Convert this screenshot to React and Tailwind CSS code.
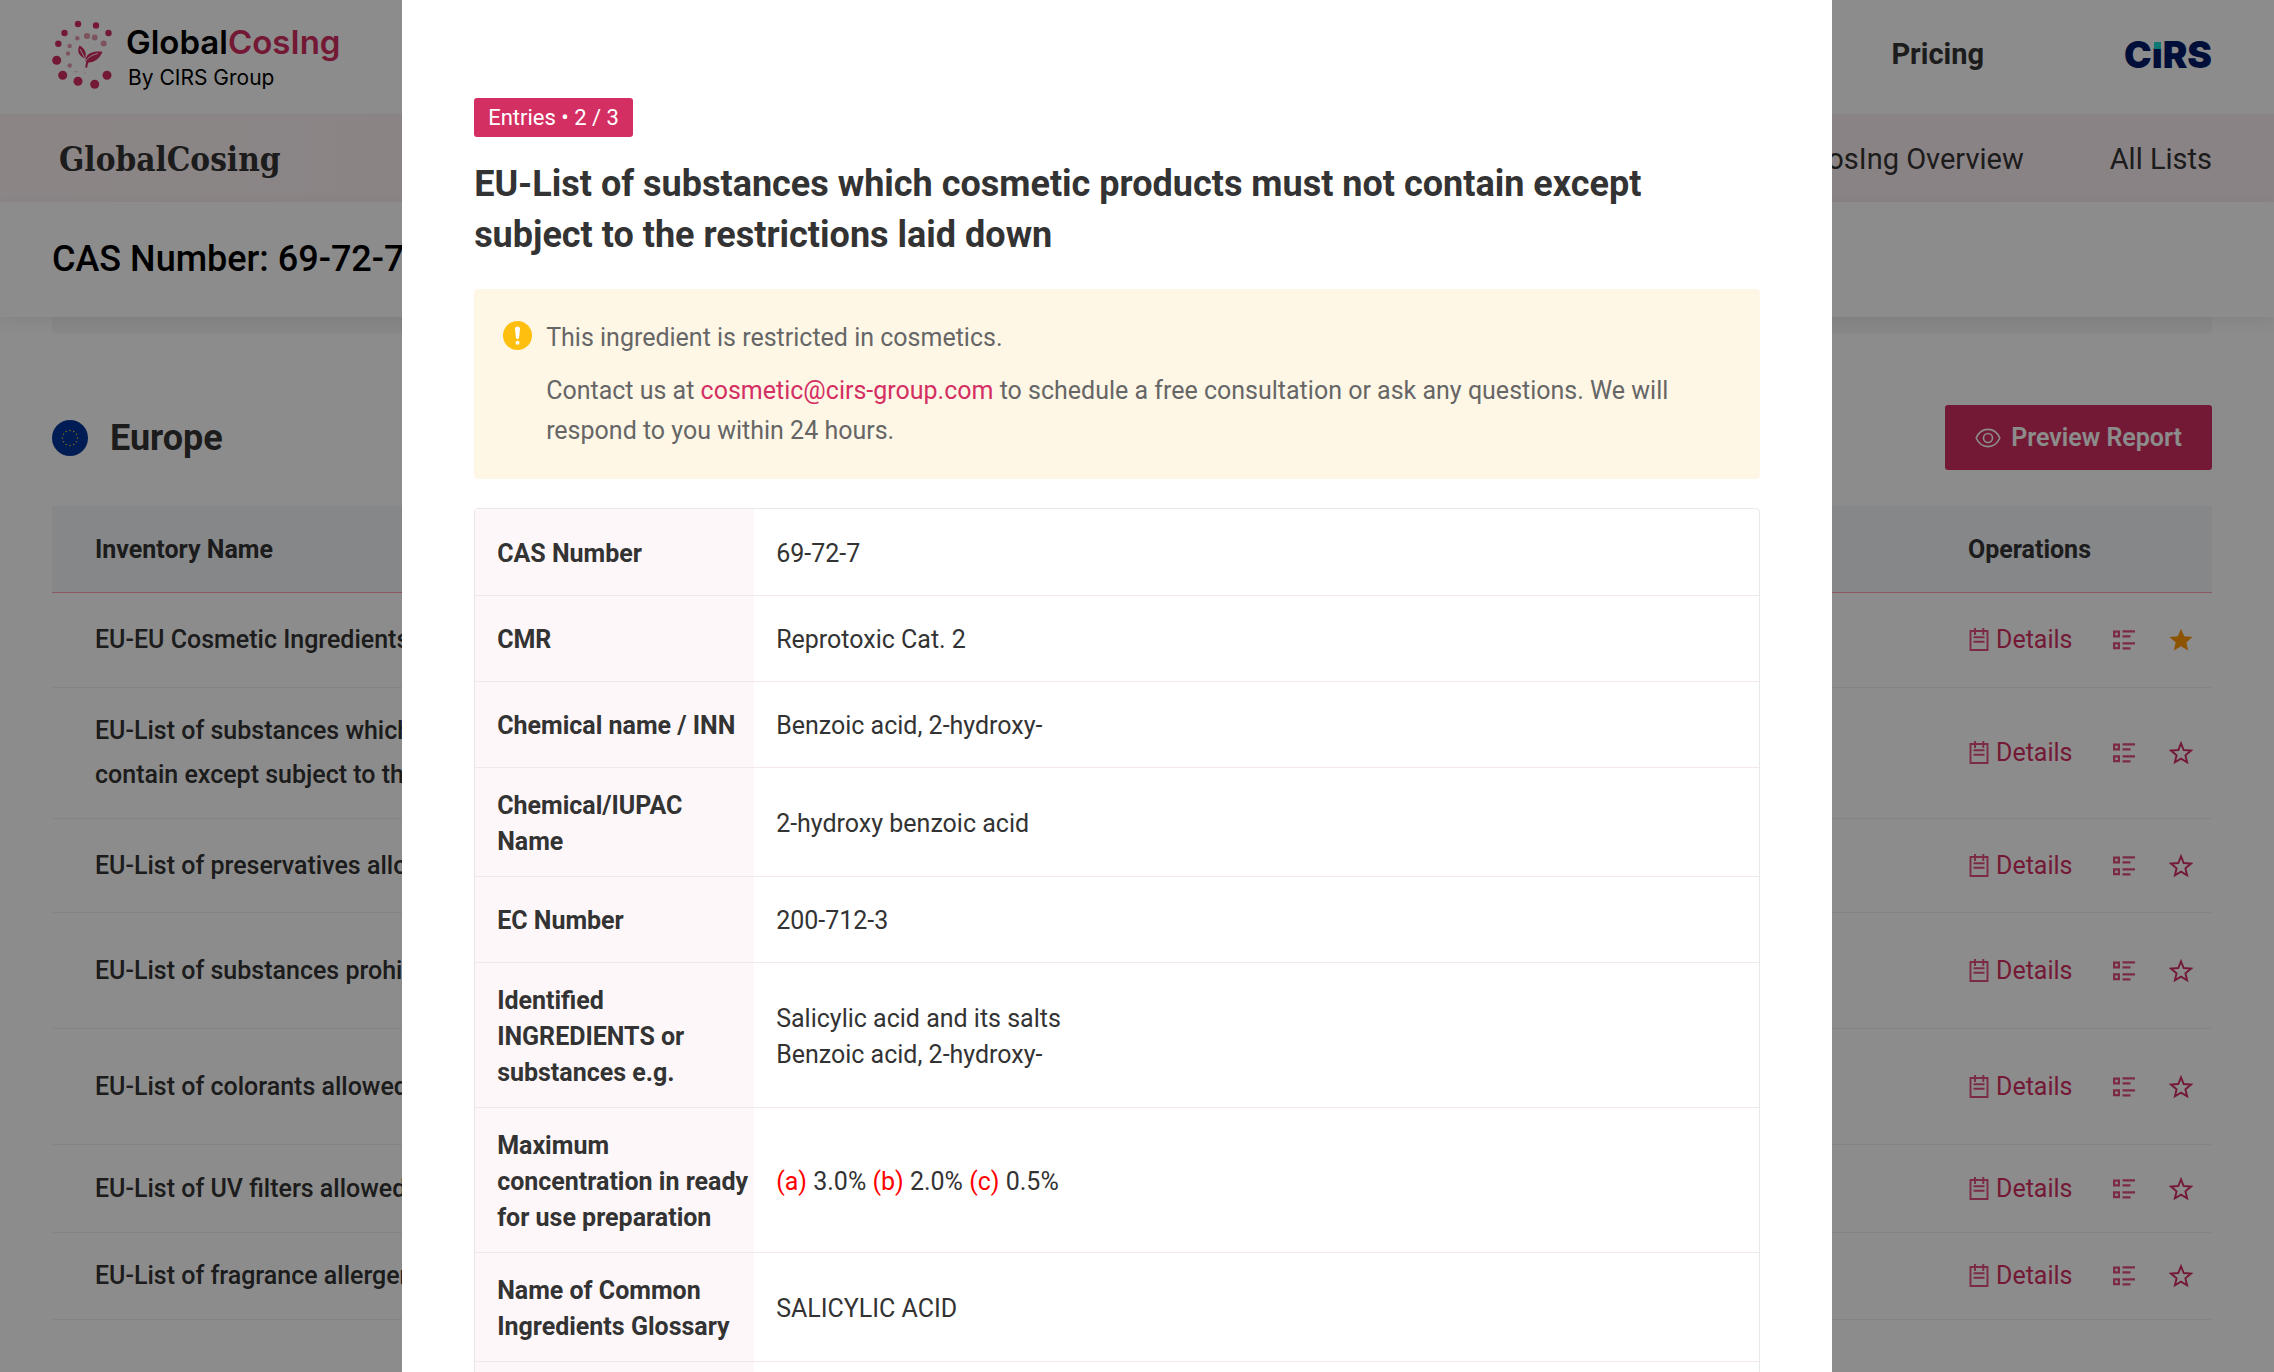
import React from "react";

const inventories = [
  { name: ["EU-EU Cosmetic Ingredients Inventory"], height: "h-[95px]", starred: true },
  {
    name: ["EU-List of substances which cosmetic products must not", "contain except subject to the restrictions laid down"],
    height: "h-[131px]",
  },
  { name: ["EU-List of preservatives allowed in cosmetic products"], height: "h-[94px]" },
  { name: ["EU-List of substances prohibited in cosmetic products"], height: "h-[116px]" },
  { name: ["EU-List of colorants allowed in cosmetic products"], height: "h-[116px]" },
  { name: ["EU-List of UV filters allowed in cosmetic products"], height: "h-[88px]" },
  { name: ["EU-List of fragrance allergens"], height: "h-[87px]" },
];

const facts = [
  ["CAS Number", "69-72-7"],
  ["CMR", "Reprotoxic Cat. 2"],
  ["Chemical name / INN", "Benzoic acid, 2-hydroxy-"],
  ["Chemical/IUPAC Name", "2-hydroxy benzoic acid"],
  ["EC Number", "200-712-3"],
  [
    "Identified INGREDIENTS or substances e.g.",
    <>
      Salicylic acid and its salts
      <br />
      Benzoic acid, 2-hydroxy-
    </>,
  ],
  [
    "Maximum concentration in ready for use preparation",
    <>
      <span className="text-[#ff0000]">(a)</span> 3.0% <span className="text-[#ff0000]">(b)</span> 2.0%{" "}
      <span className="text-[#ff0000]">(c)</span> 0.5%
    </>,
  ],
  ["Name of Common Ingredients Glossary", "SALICYLIC ACID"],
  ["", ""],
];

function LeafMark() {
  return (
    <svg className="h-[70px] w-[62px]" viewBox="0 0 62 70" aria-hidden="true">
      <g fill="#d42f62">
        <circle cx="26" cy="4" r="3.2" />
        <circle cx="44" cy="5.500" r="3.200" />
        <circle cx="56.500" cy="13" r="3.200" />
        <circle cx="12.500" cy="13" r="3.200" />
        <circle cx="6.300" cy="23.700" r="3.200" />
        <circle cx="4.700" cy="40.300" r="4.500" />
        <circle cx="10.700" cy="55.300" r="4.500" />
        <circle cx="26" cy="61.300" r="4.500" />
        <circle cx="42.700" cy="64.300" r="4.500" />
        <circle cx="55" cy="55.300" r="4.500" />
        <path d="M27.500 25.500c4.500 2.500 7.500 6.500 5.800 13-3.300-1.400-6.300-3-7-7-.4-2.300.3-4 1.200-6z" />
        <path d="M50.500 31.700c-8-.7-14.500.8-16.500 6-.6 1.500-.5 3-.2 4.300 5.500 1.500 12.700-.8 16.700-10.300z" />
        <path d="M33.500 48c-.5-5.500 2-9.500 8-12.500-3.500 3.500-5.600 6.500-6.200 12z" />
      </g>
      <path d="M28 29l4.500 8.500M33.800 41c2.200-3.600 6-6 12-7.500" stroke="#fff" strokeWidth="0.900" fill="none" />
      <g fill="#e39aab">
        <circle cx="25.300" cy="18.300" r="2.200" />
        <circle cx="35" cy="16" r="3.100" />
        <circle cx="42.700" cy="17.500" r="2.900" />
        <circle cx="51.700" cy="23.500" r="3" />
        <circle cx="17.700" cy="26" r="2.200" />
        <circle cx="16" cy="33.500" r="2.200" />
        <circle cx="17.700" cy="45.500" r="2.200" />
        <path d="M21.500 51.500h4.500l-2 1zM32.500 52l1.500 1-1 1zM45 50l1-.5v1z" />
      </g>
    </svg>
  );
}

function CirsLogo() {
  return (
    <span className="flex font-[Inter,sans-serif] text-[37px] leading-[44px] font-black text-[#001d69]">
      C
      <span className="relative">
        ı<span className="absolute top-[9px] left-[2px] size-[7px] bg-[#1adcd2]" />
      </span>
      RS
    </span>
  );
}

function EuFlag() {
  return (
    <svg className="size-9" viewBox="0 0 36 36" aria-hidden="true">
      <circle cx="18" cy="18" r="18" fill="#003399" />
      {Array.from({ length: 12 }, (_, i) => {
        const a = (i * Math.PI) / 6;
        return <circle key={i} cx={18 + 7.5 * Math.sin(a)} cy={18 - 7.5 * Math.cos(a)} r="0.8" fill="#e6c229" />;
      })}
    </svg>
  );
}

function EyeIcon() {
  return (
    <svg className="h-5 w-[26px]" viewBox="0 0 26 20" fill="none" stroke="currentColor" strokeWidth="1.600" aria-hidden="true">
      <path d="M1.200 10C3.600 4.600 8 1.400 13 1.400S22.400 4.600 24.800 10C22.400 15.400 18 18.600 13 18.600S3.600 15.400 1.200 10z" />
      <circle cx="13" cy="10" r="4.500" />
    </svg>
  );
}

function NoteIcon() {
  return (
    <svg className="h-6 w-5" viewBox="0 0 20 24" fill="none" stroke="#e0507c" strokeWidth="1.900" aria-hidden="true">
      <path d="M1.500 3h17v19h-17zM6 0v7M14.300 0v7M4.500 9.300h11M4.500 13.700h11" />
    </svg>
  );
}

function ListIcon() {
  return (
    <svg className="h-5 w-6" viewBox="0 0 24 20" fill="none" stroke="#e0507c" strokeWidth="2.200" aria-hidden="true">
      <path d="M2.100 1.600h4.800v4.800H2.100zM2.100 13.400h4.800v4.800H2.100zM10.500 1.300h12.500M10.500 6.300h8M10.500 13.300h12.500M10.500 18.300h8" />
    </svg>
  );
}

function StarIcon({ filled }) {
  return (
    <svg className="size-6" viewBox="0 0 24 24" aria-hidden="true">
      {filled ? (
        <path fill="#ff9900" d="M12 .8l3.200 7.500 8.300.7-6.200 5.400 1.900 8L12 18.300l-7.200 4.100 1.900-8L.5 9l8.300-.7z" />
      ) : (
        <path
          fill="none"
          stroke="#d42f62"
          strokeWidth="1.900"
          d="M12 2.300l2.700 6.700 7.300.6-5.600 4.700 1.700 7-6.100-3.700-6.100 3.700 1.700-7L2 9.600l7.300-.6z"
        />
      )}
    </svg>
  );
}

function AlertIcon() {
  return (
    <svg className="mt-[3px] size-[29px] shrink-0" viewBox="0 0 29 29" aria-hidden="true">
      <circle cx="14.500" cy="14.500" r="14.500" fill="#ffbf0f" />
      <path d="M12 8a2.500 2.500 0 0 1 5 0l-.9 8.300a1.600 1.600 0 0 1-3.200 0z" fill="#fff" />
      <circle cx="14.500" cy="21.800" r="2" fill="#fff" />
    </svg>
  );
}

function Page() {
  return (
    <div className="min-h-screen bg-white text-[#333333]">
      <header className="flex h-[115px] items-center justify-between border-b border-[#f5eef0] pr-[62px] pb-1 pl-[52px]">
        <a href="#home" className="flex items-center gap-3">
          <LeafMark />
          <span className="flex flex-col pt-1.5 font-[Inter,sans-serif] text-black">
            <span className="text-[33px] leading-10 font-semibold">
              Global<span className="text-[#d42f62]">CosIng</span>
            </span>
            <span className="pl-0.5 text-[21px] leading-8">By CIRS Group</span>
          </span>
        </a>
        <nav className="flex items-center gap-[140px]">
          <a href="#pricing" className="text-[29px] font-bold">Pricing</a>
          <a href="#cirs" aria-label="CIRS"><CirsLogo /></a>
        </nav>
      </header>
      <div className="flex h-[87px] items-center justify-between bg-linear-to-r from-[#fdf3f5] via-[#fbeef1] to-[#fbeff2] pt-0.5 pr-[62px] pl-[59px]">
        <span className="font-['DejaVu_Serif_Condensed','DejaVu_Serif',serif] text-[33px] font-bold">GlobalCosing</span>
        <nav className="flex gap-[86px] text-[29px]">
          <a href="#overview">CosIng Overview</a>
          <a href="#lists">All Lists</a>
        </nav>
      </div>
      <h1 className="flex h-[115px] items-center px-[52px] pb-0.5 text-[36px] font-medium text-black shadow-[0_4px_16px_rgba(0,0,0,0.08)]">
        CAS Number: 69-72-7
      </h1>
      <main className="pr-[62px] pl-[52px]">
        <div className="h-4 rounded-b bg-black/3" />
        <div className="mt-[72px] flex h-[65px] items-center justify-between">
          <h2 className="flex items-center gap-[22px] text-[36px] font-bold">
            <EuFlag />
            Europe
          </h2>
          <button className="flex h-full items-center gap-2.5 rounded-[3px] bg-[#d42f62] px-[30px] text-[25px] font-semibold text-white">
            <EyeIcon />
            Preview Report
          </button>
        </div>
        <table className="mt-9 w-full border-separate border-spacing-0 text-left text-[25px]">
          <thead>
            <tr className="h-[87px] bg-[#f3f6fa]">
              <th className="border-b border-[#ff9fb0] pt-0.5 pl-[43px] font-bold">Inventory Name</th>
              <th className="w-[244px] border-b border-[#ff9fb0] pt-0.5 font-bold">Operations</th>
            </tr>
          </thead>
          <tbody>
            {inventories.map((item) => (
              <tr key={item.name[0]} className={item.height}>
                <td className="border-b border-[#f0f0f0] pl-[43px] leading-[44px] font-medium">
                  {item.name.map((line) => (
                    <span key={line} className="block">{line}</span>
                  ))}
                </td>
                <td className="border-b border-[#f0f0f0]">
                  <div className="flex items-center">
                    <button className="flex items-center gap-[7px] pl-px text-[#d42f62]">
                      <NoteIcon />
                      Details
                    </button>
                    <button className="ml-[39px]" aria-label="Entries"><ListIcon /></button>
                    <button className="ml-[33px]" aria-label="Favourite"><StarIcon filled={item.starred} /></button>
                  </div>
                </td>
              </tr>
            ))}
          </tbody>
        </table>
      </main>
    </div>
  );
}

function EntryDialog() {
  return (
    <div className="fixed inset-0 flex justify-center overflow-hidden bg-black/45 pr-10">
      <section role="dialog" aria-labelledby="entry-title" className="h-max min-h-full w-[64%] bg-white px-[72px] pt-[98px] pb-20 text-[#333333]">
        <span className="flex h-[39px] w-max items-center rounded-[3px] bg-[#d42f62] px-3.5 text-[22px] text-white">
          Entries • 2 / 3
        </span>
        <h2 id="entry-title" className="mt-[22px] text-[36px] leading-[51px] font-bold">
          EU-List of substances which cosmetic products must not contain except subject to the restrictions laid down
        </h2>
        <div className="mt-7 flex gap-3.5 rounded bg-[#fff7e6] p-7 pt-[29px] pl-[29px] text-[25px] leading-10 text-[#666666]">
          <AlertIcon />
          <div>
            <p>This ingredient is restricted in cosmetics.</p>
            <p className="mt-[13px]">
              Contact us at{" "}
              <a href="mailto:cosmetic@cirs-group.com" className="text-[#d42f62]">cosmetic@cirs-group.com</a> to schedule a
              free consultation or ask any questions. We will respond to you within 24 hours.
            </p>
          </div>
        </div>
        <div className="mt-[29px] overflow-hidden rounded border border-[#e8e8e8]">
          <table className="w-full border-collapse text-left text-[25px] leading-9">
            <tbody>
              {facts.map(([label, value]) => (
                <tr key={label} className="h-[86px] border-b border-[#f2e8ec]">
                  <th className="w-[279px] bg-[#fdf7f9] pt-5 pr-1 pb-4 pl-[22px] font-bold">{label}</th>
                  <td className="px-[22px] pt-5 pb-4">{value}</td>
                </tr>
              ))}
            </tbody>
          </table>
        </div>
      </section>
    </div>
  );
}

export default function App() {
  return (
    <div className="h-screen overflow-hidden font-[Roboto,sans-serif]">
      <Page />
      <EntryDialog />
    </div>
  );
}
